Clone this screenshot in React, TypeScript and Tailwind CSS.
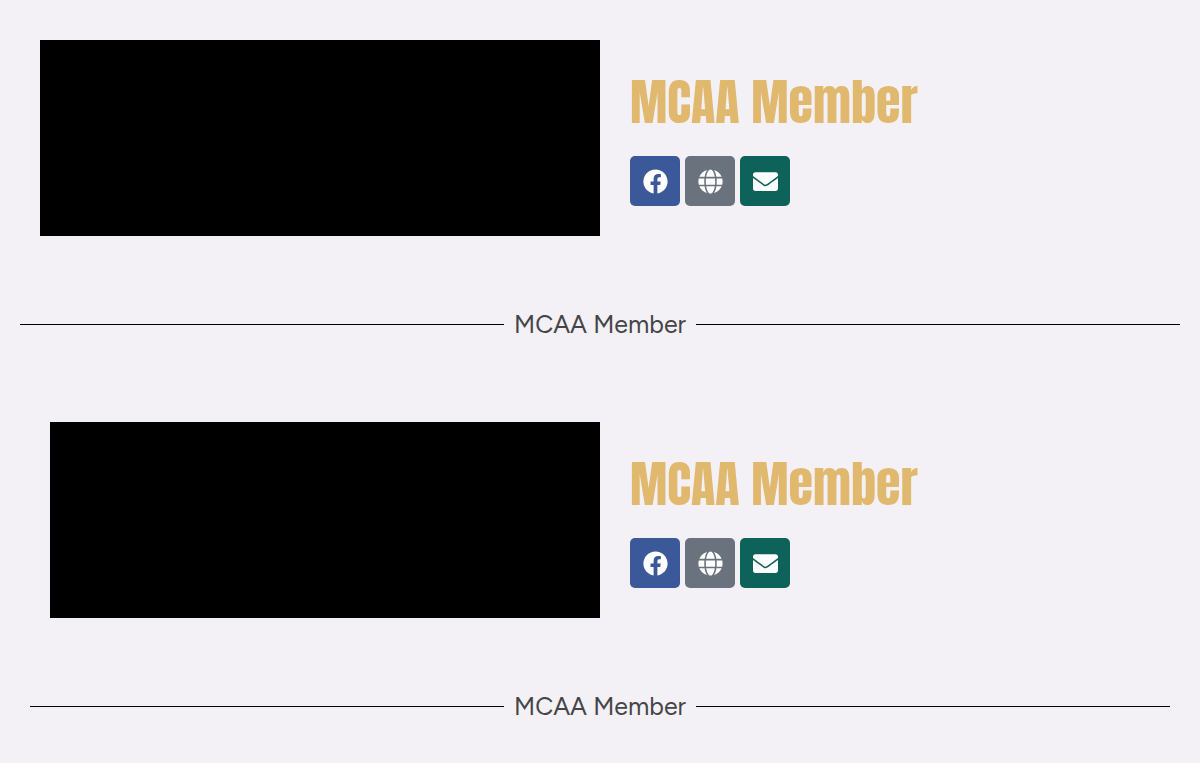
import { FaFacebook, FaEnvelope, FaGlobe } from "react-icons/fa";
import { clsx } from "clsx";

const links = [
  { label: "Facebook", icon: FaFacebook, color: "bg-[#3b5998]" },
  { label: "Website", icon: FaGlobe, color: "bg-[#69727d]" },
  { label: "Email", icon: FaEnvelope, color: "bg-[#0d6259]" },
];

const SocialLinks = () => (
  <div className="flex gap-[5px]">
    {links.map(({ label, icon: Icon, color }) => (
      <a
        key={label}
        href="#"
        aria-label={label}
        className={clsx(
          "flex size-[50px] items-center justify-center rounded-[5px] text-white transition hover:opacity-90",
          color
        )}
      >
        <Icon className="size-[25px]" />
      </a>
    ))}
  </div>
);

const Divider = ({ text }: { text: string }) => (
  <div className="flex items-center">
    <span className="h-px flex-1 bg-black" />
    <span className="mx-[10px] font-['Figtree','Lato',sans-serif] text-[25px] leading-[30px] text-[#454548]">
      {text}
    </span>
    <span className="h-px flex-1 bg-black" />
  </div>
);

const Member = ({ inset = false }: { inset?: boolean }) => (
  <section className={clsx(inset && "px-[10px]")}>
    <div className="grid grid-cols-2">
      <div className="pl-5">
        <div className="h-[196px] bg-black" />
      </div>
      <div className="flex flex-col justify-center gap-6 pt-[2px] pl-[30px]">
        <h2 className="font-['Anton','Impact',sans-serif] text-[50px] leading-[60px] font-normal text-[#e0b86e]">
          MCAA Member
        </h2>
        <SocialLinks />
      </div>
    </div>
    <div className="pt-[73px]">
      <Divider text="MCAA Member" />
    </div>
  </section>
);

const App = () => {
  return (
    <main className="flex min-h-screen flex-col gap-[83px] bg-[#f3f0f6] px-5 py-10">
      <Member />
      <Member inset />
    </main>
  );
};

export default App;
